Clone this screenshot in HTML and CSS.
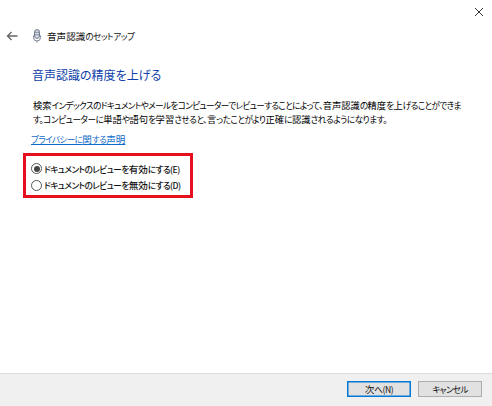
FILE: index.html
```html
<!DOCTYPE html>
<html lang="ja">
<head>
<meta charset="utf-8">
<title>音声認識のセットアップ</title>
<link rel="stylesheet" href="styles.css">
</head>
<body>
<div class="window">
  <div class="titlebar">
    <svg class="close" width="10" height="10" viewBox="0 0 10 10"><path d="M1 1L9 9M9 1L1 9" stroke="#333" stroke-width="1" fill="none"/></svg>
  </div>
  <div class="nav">
    <svg class="back" width="12" height="10" viewBox="0 0 12 10"><path d="M5.5 1L1.5 5L5.5 9M1.5 5H11.5" stroke="#666" stroke-width="1.4" fill="none"/></svg>
    <svg class="mic" width="8" height="14" viewBox="0 0 8 14"><rect x="1.5" y="0.6" width="5" height="8.8" rx="2.5" fill="#d5dbe6" stroke="#6f7787"/><path d="M1.5 3.3H6.5M1.5 5.8H6.5" stroke="#6f7787" stroke-width="0.8"/><path d="M0.5 6.5V8.5A3.5 3.5 0 0 0 7.5 8.5V6.5M4 12V13.6" stroke="#7d8595" fill="none"/></svg>
    <span class="nav-title"><span class="kj">音声認識</span>のセットアップ</span>
  </div>
  <main class="content">
    <h1 class="heading">音声認識の精度を上げる</h1>
    <p class="desc"><span class="line first"><span class="kj">検索</span>インデックスのドキュメントやメールをコンピューターでレビューすることによって、<span class="kj">音声認識</span>の<span class="kj">精度</span>を<span class="kj">上</span>げることができま</span><span class="line">す。コンピューターに<span class="kj">単語</span>や<span class="kj">語句</span>を<span class="kj">学習</span>させると、<span class="kj">言</span>ったことがより<span class="kj">正確</span>に<span class="kj">認識</span>されるようになります。</span></p>
    <a class="link" href="#">プライバシーに<span class="kj">関</span>する<span class="kj">声明</span></a>
    <div class="options">
      <label class="option"><span class="radio checked"></span><span>ドキュメントのレビューを<span class="kj">有効</span>にする(E)</span></label>
      <label class="option"><span class="radio"></span><span>ドキュメントのレビューを<span class="kj">無効</span>にする(D)</span></label>
    </div>
  </main>
  <footer class="footer">
    <button class="btn primary"><span class="kj">次</span>へ(N)</button>
    <button class="btn">キャンセル</button>
  </footer>
</div>
</body>
</html>
```
FILE: styles.css
```css
* { box-sizing: border-box; }
html, body { margin: 0; padding: 0; }
body { width: 492px; height: 406px; background: #fff; overflow: hidden; font-family: "Noto Sans CJK JP", "Noto Sans", sans-serif; color: #111; font-feature-settings: "palt" 1; }
.window { width: 492px; height: 406px; display: flex; flex-direction: column; }
.titlebar { height: 24px; display: flex; justify-content: flex-end; align-items: flex-start; padding: 7px 8px 0 0; flex: none; }
.nav { height: 24px; display: flex; align-items: center; padding-left: 6px; flex: none; }
.back { margin-right: 15px; }
.mic { margin-right: 6px; }
.kj { font-size: 9.6px; letter-spacing: 0; }
.nav-title { font-size: 8.6px; letter-spacing: -0.5px; }
.content { flex: 1; padding: 19px 0 0 32px; display: flex; flex-direction: column; align-items: flex-start; }
.heading { margin: 0; font-size: 12px; line-height: 16px; font-weight: 400; color: #0e3fa8; }
.desc { margin: 16px 0 0 1px; white-space: nowrap; font-size: 8.6px; letter-spacing: -0.47px; line-height: 13.5px; color: #000; }
.desc .kj { font-size: 9.3px; letter-spacing: 0; }
.line { display: block; }
.line.first { letter-spacing: -0.63px; }
.link { margin-top: 6.5px; margin-left: -1px; font-size: 8.6px; letter-spacing: -0.6px; line-height: 13px; color: #0f6cc8; text-decoration: underline; }
.options { margin: 7px 0 0 -9px; width: 170px; height: 45px; border: 3px solid #e60f1e; padding: 6px 0 0 5px; display: flex; flex-direction: column; gap: 2.5px; }
.option { display: flex; align-items: center; height: 14px; font-size: 8.6px; letter-spacing: -0.55px; font-weight: 500; white-space: nowrap; }
.radio { width: 11px; height: 11px; border: 1px solid #555; border-radius: 50%; margin-right: 2px; flex: none; background: #fff; display: flex; align-items: center; justify-content: center; }
.radio.checked::after { content: ""; width: 6px; height: 6px; border-radius: 50%; background: #444; }
.footer { height: 33px; flex: none; background: #f0f0f0; border-top: 1px solid #dcdcdc; display: flex; justify-content: flex-end; gap: 7px; padding: 7px 10px 0 0; }
.btn { width: 64px; height: 16px; padding: 0; border: 1px solid #adadad; background: #e1e1e1; font: 8.6px "Noto Sans CJK JP", sans-serif; font-feature-settings: "palt" 1; letter-spacing: -0.7px; color: #111; }
.btn.primary { border: 1px solid #0078d7; box-shadow: inset 0 0 0 0.5px #0078d7; letter-spacing: -0.4px; }
```
